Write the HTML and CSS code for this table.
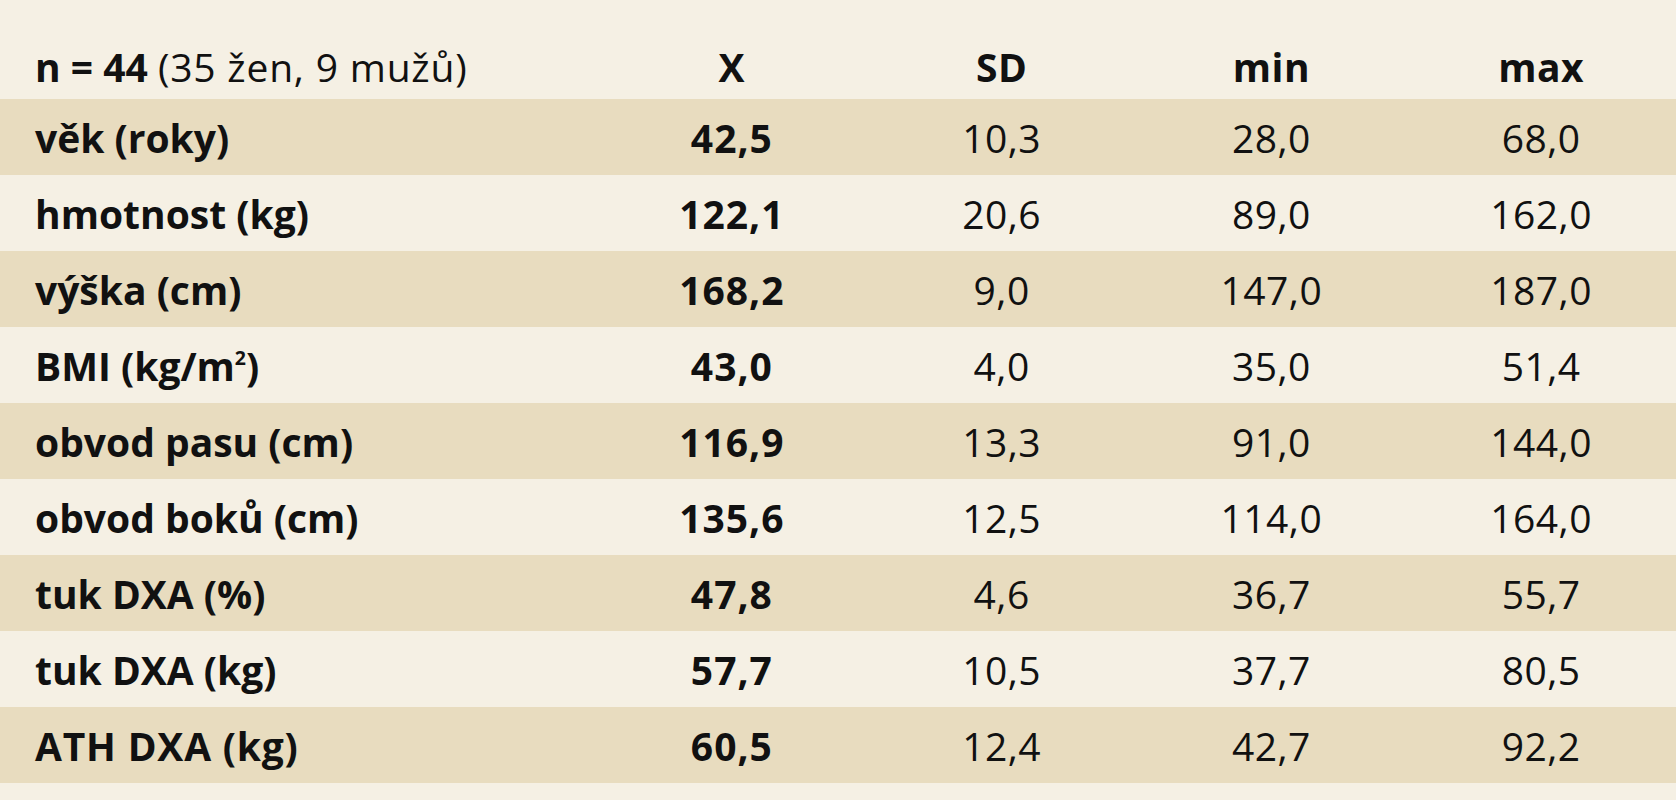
FILE: index.html
```html
<!DOCTYPE html>
<html lang="cs">
<head>
<meta charset="utf-8">
<link rel="stylesheet" href="styles.css">
</head>
<body>
<div class="page">
  <div class="table">
    <div class="row head">
      <div class="cell label"><b>n = 44</b> <span class="note">(35 žen, 9 mužů)</span></div>
      <div class="cell num hd">X</div>
      <div class="cell num hd">SD</div>
      <div class="cell num hd">min</div>
      <div class="cell num hd">max</div>
    </div>
    <div class="row band">
      <div class="cell label strong">věk (roky)</div>
      <div class="cell num strong">42,5</div>
      <div class="cell num">10,3</div>
      <div class="cell num">28,0</div>
      <div class="cell num">68,0</div>
    </div>
    <div class="row">
      <div class="cell label strong">hmotnost (kg)</div>
      <div class="cell num strong">122,1</div>
      <div class="cell num">20,6</div>
      <div class="cell num">89,0</div>
      <div class="cell num">162,0</div>
    </div>
    <div class="row band">
      <div class="cell label strong">výška (cm)</div>
      <div class="cell num strong">168,2</div>
      <div class="cell num">9,0</div>
      <div class="cell num">147,0</div>
      <div class="cell num">187,0</div>
    </div>
    <div class="row">
      <div class="cell label strong">BMI (kg/m<sup>2</sup>)</div>
      <div class="cell num strong">43,0</div>
      <div class="cell num">4,0</div>
      <div class="cell num">35,0</div>
      <div class="cell num">51,4</div>
    </div>
    <div class="row band">
      <div class="cell label strong">obvod pasu (cm)</div>
      <div class="cell num strong">116,9</div>
      <div class="cell num">13,3</div>
      <div class="cell num">91,0</div>
      <div class="cell num">144,0</div>
    </div>
    <div class="row">
      <div class="cell label strong">obvod boků (cm)</div>
      <div class="cell num strong">135,6</div>
      <div class="cell num">12,5</div>
      <div class="cell num">114,0</div>
      <div class="cell num">164,0</div>
    </div>
    <div class="row band">
      <div class="cell label strong">tuk DXA (%)</div>
      <div class="cell num strong">47,8</div>
      <div class="cell num">4,6</div>
      <div class="cell num">36,7</div>
      <div class="cell num">55,7</div>
    </div>
    <div class="row">
      <div class="cell label strong">tuk DXA (kg)</div>
      <div class="cell num strong">57,7</div>
      <div class="cell num">10,5</div>
      <div class="cell num">37,7</div>
      <div class="cell num">80,5</div>
    </div>
    <div class="row band">
      <div class="cell label strong caps">ATH DXA (kg)</div>
      <div class="cell num strong">60,5</div>
      <div class="cell num">12,4</div>
      <div class="cell num">42,7</div>
      <div class="cell num">92,2</div>
    </div>
  </div>
</div>
</body>
</html>
```
FILE: styles.css
```css
html, body {
  margin: 0;
  padding: 0;
  background: #f5f0e4;
}
.page {
  width: 1676px;
  height: 800px;
  background: #f5f0e4;
  font-family: "Open Sans", "Noto Sans", sans-serif;
  color: #111;
  font-size: 39px;
}
.table {
  display: flex;
  flex-direction: column;
}
.row {
  display: grid;
  grid-template-columns: 597px 1fr 1fr 1fr 1fr;
  height: 76px;
  align-items: center;
}
.row.head {
  height: 99px;
}
.row.band {
  background: #e8dcbf;
}
.cell.label {
  padding-left: 35px;
}
.cell.num {
  text-align: center;
  letter-spacing: 0.5px;
}
.cell.num.strong {
  letter-spacing: 1px;
}
.strong, .hd, b {
  font-weight: 700;
}
.note {
  letter-spacing: 0.8px;
}
.caps {
  letter-spacing: 0.8px;
}
.row.head .label,
.row.head .hd {
  padding-top: 34px;
}
sup {
  font-size: 0.5em;
  vertical-align: 0;
  position: relative;
  top: -0.8em;
}
```
